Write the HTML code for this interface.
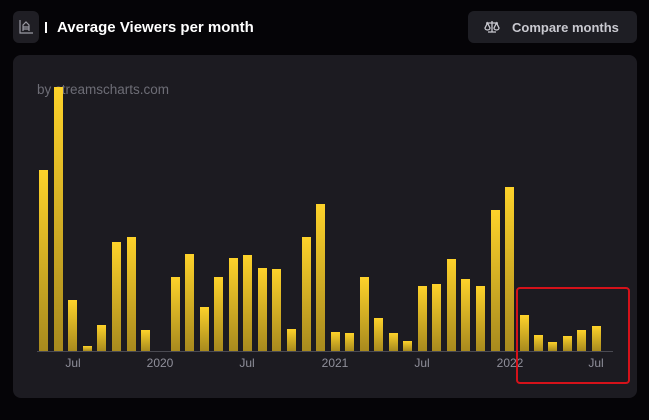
<!DOCTYPE html><html><head><style>
body{margin:0;width:649px;height:420px;background:#050407;font-family:"Liberation Sans",sans-serif;position:relative;overflow:hidden}
.ib{position:absolute;left:13px;top:11px;width:26px;height:32px;background:#1f1e24;border-radius:6px}
.t{position:absolute;left:57px;top:19px;color:#fff;font-weight:bold;font-size:15px}
.btn{position:absolute;left:468px;top:11px;width:169px;height:32px;background:#1e1e24;border-radius:6px;color:#c9c9d0;font-weight:bold;font-size:13px}
.card{position:absolute;left:13px;top:55px;width:624px;height:343px;background:#1c1b21;border-radius:8px}
.b{position:absolute;width:9px;background:linear-gradient(#fdd22a,#a88a1e);bottom:69px}
.l{position:absolute;top:356px;color:#8f8f9a;font-size:12px;transform:translateX(-50%)}
</style></head><body>
<div class="ib"><svg width="26" height="32" viewBox="0 0 26 32"><g stroke="#9a9aa3" stroke-width="1.2" fill="none"><path d="M7 9v13h13"/><path d="M10 20v-6l3-3 3 3v6M10 16h6M10 18h6"/></g></svg></div>
<div style="position:absolute;left:45px;top:22px;width:2px;height:11px;background:#fff"></div>
<div class="t">Average Viewers per month</div>
<div class="btn"><svg style="position:absolute;left:16px;top:9px" width="16" height="14" viewBox="0 0 16 14"><g stroke="#c9c9d0" stroke-width="1.3" fill="none"><path d="M2 3h12M8 1v11M4 12h8M3.5 3 1 8a2.5 2 0 0 0 5 0zM12.5 3 10 8a2.5 2 0 0 0 5 0z"/></g></svg><span style="position:absolute;left:44px;top:9px">Compare months</span></div>
<div class="card"></div>
<div style="position:absolute;left:37px;top:82px;color:#6d6d76;font-size:13.5px">by streamscharts.com</div>
<div style="position:absolute;left:37px;top:351px;width:576px;height:1px;background:#4a4a52"></div>
<div class="l" style="left:73px">Jul</div><div class="l" style="left:160px">2020</div><div class="l" style="left:247px">Jul</div><div class="l" style="left:335px">2021</div><div class="l" style="left:422px">Jul</div><div class="l" style="left:510px">2022</div><div class="l" style="left:596px">Jul</div>
<div style="position:absolute;left:516px;top:287px;width:110px;height:93px;border:2px solid #d4121a;border-radius:4px"></div>
<div class="b" style="left:39px;height:181px"></div><div class="b" style="left:54px;height:264px"></div><div class="b" style="left:68px;height:51px"></div><div class="b" style="left:83px;height:5px"></div><div class="b" style="left:97px;height:26px"></div><div class="b" style="left:112px;height:109px"></div><div class="b" style="left:127px;height:114px"></div><div class="b" style="left:141px;height:21px"></div><div class="b" style="left:171px;height:74px"></div><div class="b" style="left:185px;height:97px"></div><div class="b" style="left:200px;height:44px"></div><div class="b" style="left:214px;height:74px"></div><div class="b" style="left:229px;height:93px"></div><div class="b" style="left:243px;height:96px"></div><div class="b" style="left:258px;height:83px"></div><div class="b" style="left:272px;height:82px"></div><div class="b" style="left:287px;height:22px"></div><div class="b" style="left:302px;height:114px"></div><div class="b" style="left:316px;height:147px"></div><div class="b" style="left:331px;height:19px"></div><div class="b" style="left:345px;height:18px"></div><div class="b" style="left:360px;height:74px"></div><div class="b" style="left:374px;height:33px"></div><div class="b" style="left:389px;height:18px"></div><div class="b" style="left:403px;height:10px"></div><div class="b" style="left:418px;height:65px"></div><div class="b" style="left:432px;height:67px"></div><div class="b" style="left:447px;height:92px"></div><div class="b" style="left:461px;height:72px"></div><div class="b" style="left:476px;height:65px"></div><div class="b" style="left:491px;height:141px"></div><div class="b" style="left:505px;height:164px"></div><div class="b" style="left:520px;height:36px"></div><div class="b" style="left:534px;height:16px"></div><div class="b" style="left:548px;height:9px"></div><div class="b" style="left:563px;height:15px"></div><div class="b" style="left:577px;height:21px"></div><div class="b" style="left:592px;height:25px"></div>
</body></html>
